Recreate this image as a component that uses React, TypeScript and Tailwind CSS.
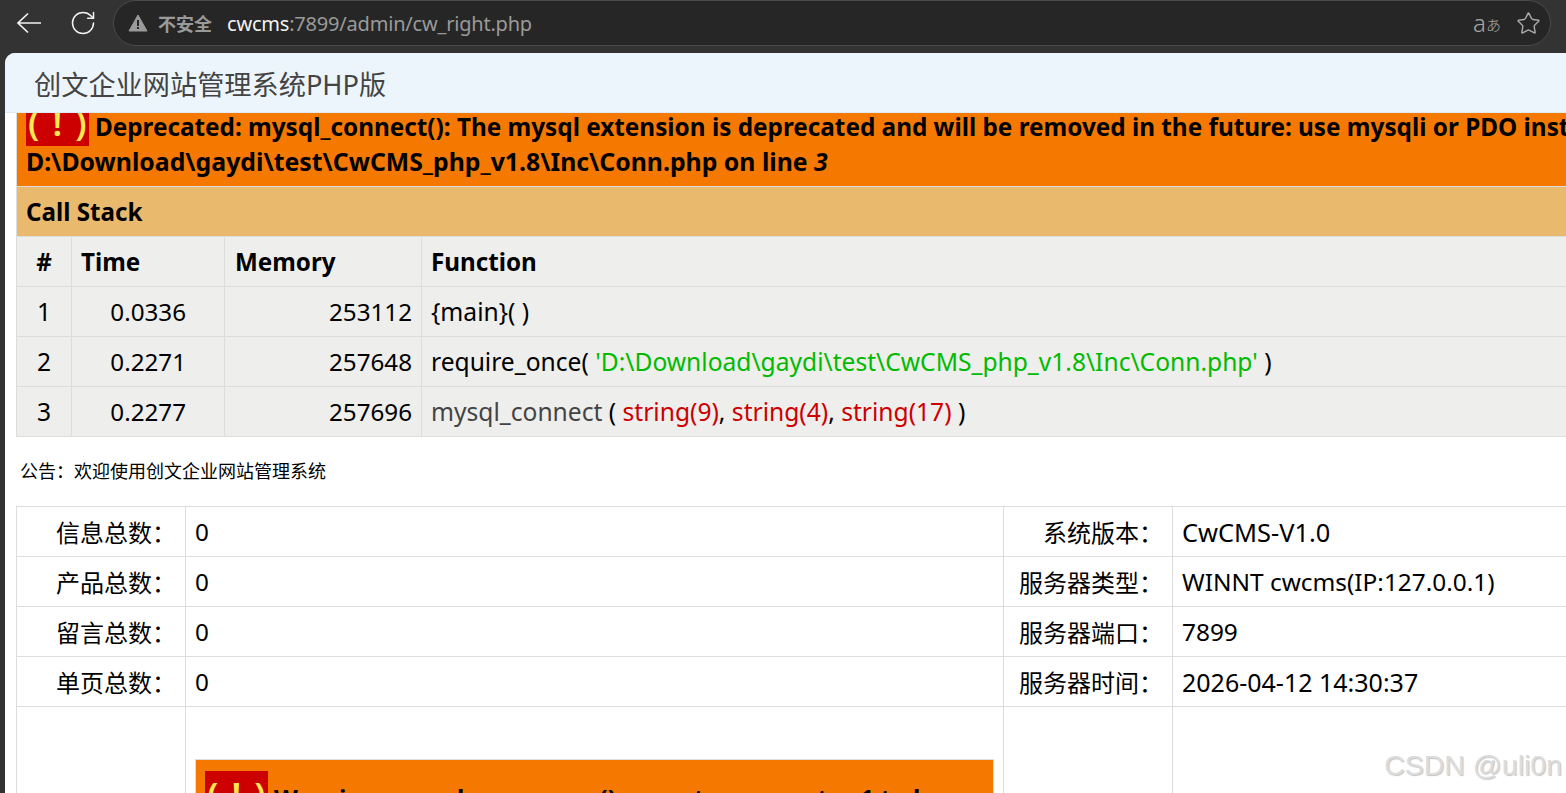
/**
 * Browser window showing the CwCMS admin page with xdebug error tables.
 */

import { RotateCw, Star } from "lucide-react";

const STACK = [
  { n: "1", time: "0.0336", mem: "253112" },
  { n: "2", time: "0.2271", mem: "257648" },
  { n: "3", time: "0.2277", mem: "257696" },
];

const INFO = [
  { a: "信息总数：", b: "0", c: "系统版本：", d: "CwCMS-V1.0", size: "text-[25.4px]" },
  { a: "产品总数：", b: "0", c: "服务器类型：", d: "WINNT cwcms(IP:127.0.0.1)", size: "text-[24.4px]" },
  { a: "留言总数：", b: "0", c: "服务器端口：", d: "7899", size: "text-[24.4px]" },
  { a: "单页总数：", b: "0", c: "服务器时间：", d: "2026-04-12 14:30:37", size: "text-[25px]" },
];

function Bang() {
  return (
    <span className="whitespace-pre bg-[#cc0000] pl-[2px] text-[35px] font-semibold leading-[20px] tracking-[2px] text-[#fce94f]">
      {"( ! )"}
    </span>
  );
}

function StackFn({ row }: { row: string }) {
  if (row === "1") return <>{"{main}( )"}</>;
  if (row === "2")
    return (
      <>
        require_once( <span className="text-[#00bb00]">'D:\Download\gaydi\test\CwCMS_php_v1.8\Inc\Conn.php'</span> )
      </>
    );
  return (
    <>
      <span className="text-[#444444]">mysql_connect</span> ({" "}
      <span className="text-[#cc0000]">string(9)</span>, <span className="text-[#cc0000]">string(4)</span>,{" "}
      <span className="text-[#cc0000]">string(17)</span> )
    </>
  );
}

export default function App() {
  return (
    <div className="relative flex h-[793px] w-[1566px] flex-col overflow-hidden bg-[#333333] font-['Noto_Sans','Noto_Sans_CJK_SC',sans-serif]">
      {/* Browser toolbar */}
      <header className="flex h-[53px] flex-shrink-0 items-start">
        <svg width="26" height="22" viewBox="0 0 26 22" fill="none" stroke="#f2f2f2" strokeWidth="1.7" className="ml-[16px] mt-[12px]">
          <path d="M2 11 H25 M12 1.5 L2 11 L12 20.5" />
        </svg>
        <RotateCw size={28} strokeWidth={1.3} className="ml-[27px] mt-[9px] text-[#f2f2f2]" />
        <div className="ml-[16px] mr-[15px] flex h-[46px] flex-1 items-center rounded-[23px] border border-[#4a4a4a] bg-[#262626]">
          <svg width="20" height="18" viewBox="0 0 20 18" className="ml-[14px] text-[#9a9a9a]">
            <path d="M10 1 L19 17 H1 Z" fill="currentColor" stroke="currentColor" strokeLinejoin="round" />
            <rect x="9" y="6" width="2" height="6" fill="#262626" />
            <rect x="9" y="13" width="2" height="2" fill="#262626" />
          </svg>
          <span className="ml-[10px] mt-[2px] text-[18px] font-bold text-[#9a9a9a]">不安全</span>
          <span className="ml-[15px] mt-[2px] text-[20px] tracking-[-0.2px] text-[#f2f2f2]">
            cwcms<span className="text-[#9a9a9a]">:7899/admin/cw_right.php</span>
          </span>
          <span className="ml-auto flex items-end text-[#a8a8a8]">
            <span className="text-[24px] font-light leading-[24px]">a</span>
            <span className="text-[15px] font-light leading-[19px]">あ</span>
          </span>
          <Star size={25} strokeWidth={1.4} className="ml-[15px] mr-[9px] text-[#a8a8a8]" />
        </div>
      </header>

      {/* Page panel */}
      <div className="ml-[5px] flex min-h-0 flex-1 flex-col overflow-hidden rounded-tl-[10px] bg-white">
        <div className="flex h-[60px] flex-shrink-0 items-center border-b border-[#dfeaf2] bg-[#ecf5fb] pl-[29px] pt-[5px] text-[27.2px] text-[#444444]">
          创文企业网站管理系统PHP版
        </div>

        <div className="min-h-0 flex-1 overflow-hidden pl-[11px]">
          {/* Xdebug notice, scrolled part way out of view */}
          <table className="-mt-[25px] w-[1700px] table-fixed border-collapse text-[24.6px] text-black [&_td]:pt-[2px] [&_th]:pt-[2px]">
            <colgroup>
              <col className="w-[55px]" />
              <col className="w-[153px]" />
              <col className="w-[197px]" />
              <col />
            </colgroup>
            <tbody>
              <tr>
                <td colSpan={4} className="h-[98px] border border-[#dddddd] bg-[#f57900] px-[9px] align-bottom font-bold leading-[34px]">
                  <div className="whitespace-nowrap pb-[7px]">
                    <span className="text-[24.3px]">
                      <Bang /> Deprecated: mysql_connect(): The mysql extension is deprecated and will be removed in the future: use mysqli or PDO instead in
                    </span>
                    <br />
                    <span className="text-[24.8px]">
                      D:\Download\gaydi\test\CwCMS_php_v1.8\Inc\Conn.php on line <i>3</i>
                    </span>
                  </div>
                </td>
              </tr>
              <tr>
                <th colSpan={4} className="h-[50px] border border-[#dddddd] bg-[#e9b96e] px-[9px] text-left text-[24.2px] font-bold">
                  Call Stack
                </th>
              </tr>
              <tr className="h-[50px] bg-[#eeeeec] text-[24.2px]">
                <th className="border border-[#dddddd] font-bold">#</th>
                <th className="border border-[#dddddd] pl-[9px] text-left font-bold">Time</th>
                <th className="border border-[#dddddd] pl-[10px] text-left font-bold">Memory</th>
                <th className="border border-[#dddddd] pl-[9px] text-left font-bold">Function</th>
              </tr>
              {STACK.map((s) => (
                <tr key={s.n} className="h-[50px] bg-[#eeeeec]">
                  <td className="border border-[#dddddd] text-center">{s.n}</td>
                  <td className="border border-[#dddddd] pr-[38px] text-right text-[24.2px]">{s.time}</td>
                  <td className="border border-[#dddddd] pr-[9px] text-right text-[24.2px]">{s.mem}</td>
                  <td className="whitespace-nowrap border border-[#dddddd] pl-[9px]">
                    <StackFn row={s.n} />
                  </td>
                </tr>
              ))}
            </tbody>
          </table>

          <p className="mb-[23px] mt-[22px] pl-[4px] text-[18px] leading-[24px] text-black">公告：欢迎使用创文企业网站管理系统</p>

          {/* System info */}
          <table className="w-[1700px] table-fixed border-collapse text-[24.3px] text-black">
            <colgroup>
              <col className="w-[169px]" />
              <col className="w-[818px]" />
              <col className="w-[169px]" />
              <col />
            </colgroup>
            <tbody>
              {INFO.map((r) => (
                <tr key={r.a} className="h-[50px] [&>td]:pt-[2px]">
                  <td className="border border-[#dddddd] pr-[9px] text-right text-[24px]">{r.a}</td>
                  <td className="border border-[#dddddd] px-[9px]">{r.b}</td>
                  <td className="border border-[#dddddd] pr-[9px] text-right text-[24px]">{r.c}</td>
                  <td className={`whitespace-nowrap border border-[#dddddd] px-[9px] ${r.size}`}>{r.d}</td>
                </tr>
              ))}
              <tr>
                <td className="border border-[#dddddd]" />
                <td className="border border-[#dddddd] px-[9px] pt-[52px] align-top">
                  <div className="h-[60px] overflow-hidden whitespace-nowrap border border-[#dddddd] bg-[#f57900] px-[9px] pt-[22px] text-[24.6px] font-bold leading-[34px]">
                    <Bang /> Warning: mysql_num_rows() expects parameter 1 to be
                  </div>
                </td>
                <td className="border border-[#dddddd]" />
                <td className="border border-[#dddddd]" />
              </tr>
            </tbody>
          </table>
        </div>
      </div>

      {/* Watermark */}
      <span className="absolute bottom-[10px] right-[4px] font-['Liberation_Sans',sans-serif] text-[28.5px] leading-[36px] text-[#dcdcdc] [text-shadow:1px_1px_1px_#c4c4c4]">
        CSDN @uli0n
      </span>
    </div>
  );
}
